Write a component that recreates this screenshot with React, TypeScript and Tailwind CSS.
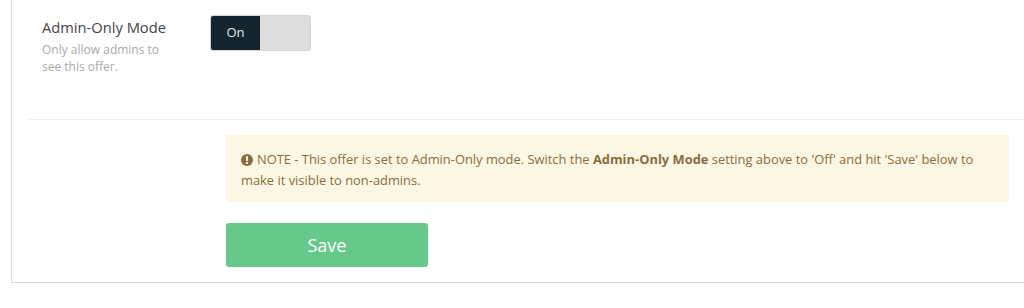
function Toggle({ on }: { on: boolean }) {
  return (
    <div className="flex h-[36px] w-[101px] overflow-hidden rounded-[3px] border border-[#d4d4d4] bg-[#dddddd]">
      <div
        className={`flex w-[49px] items-center justify-center text-[13px] ${
          on ? 'bg-[#13262f] text-[#e6e6e6]' : 'bg-transparent text-transparent'
        }`}
      >
        On
      </div>
    </div>
  )
}

function AlertIcon() {
  return (
    <svg viewBox="0 0 16 16" className="mr-[4px] inline-block h-[12px] w-[12px] -translate-y-[1px]">
      <circle cx="8" cy="8" r="8" fill="#8a6d3b" />
      <rect x="6.6" y="3" width="2.8" height="6.4" rx="0.6" fill="#fcf7e4" />
      <rect x="6.6" y="10.6" width="2.8" height="2.6" rx="0.6" fill="#fcf7e4" />
    </svg>
  )
}

export default function App() {
  return (
    <div className="h-[308px] w-[1024px] overflow-hidden bg-white font-['Open_Sans',sans-serif]">
      <div className="ml-[11px] w-[1030px] border-b border-l border-[#dddddd] pb-[15px]">
        <div className="flex px-[30px] pt-[15px] pb-[44px]">
          <div className="w-[168px]">
            <div className="mt-[2px] text-[14.7px] leading-[20px] text-[#444444]">Admin-Only Mode</div>
            <div className="mt-[4px] w-[130px] text-[12px] leading-[17px] text-[#a9a9a9]">
              Only allow admins to see this offer.
            </div>
          </div>
          <Toggle on />
        </div>
        <div className="ml-[16px] border-t border-dotted border-[#dcdcdc]" />
        <div className="pt-[15px] pl-[214px]">
          <div className="w-[783px] bg-[#fcf7e4] px-[15px] pt-[14px] pb-[11px] text-[12.9px] leading-[21px] text-[#8a6d3b]">
            <AlertIcon />
            NOTE - This offer is set to Admin-Only mode. Switch the <b className="font-bold">Admin-Only Mode</b>{' '}
            setting above to 'Off' and hit 'Save' below to make it visible to non-admins.
          </div>
          <button className="mt-[21px] h-[44px] w-[202px] rounded-[3px] bg-[#66c98b] text-[18px] text-white">
            Save
          </button>
        </div>
      </div>
    </div>
  )
}
